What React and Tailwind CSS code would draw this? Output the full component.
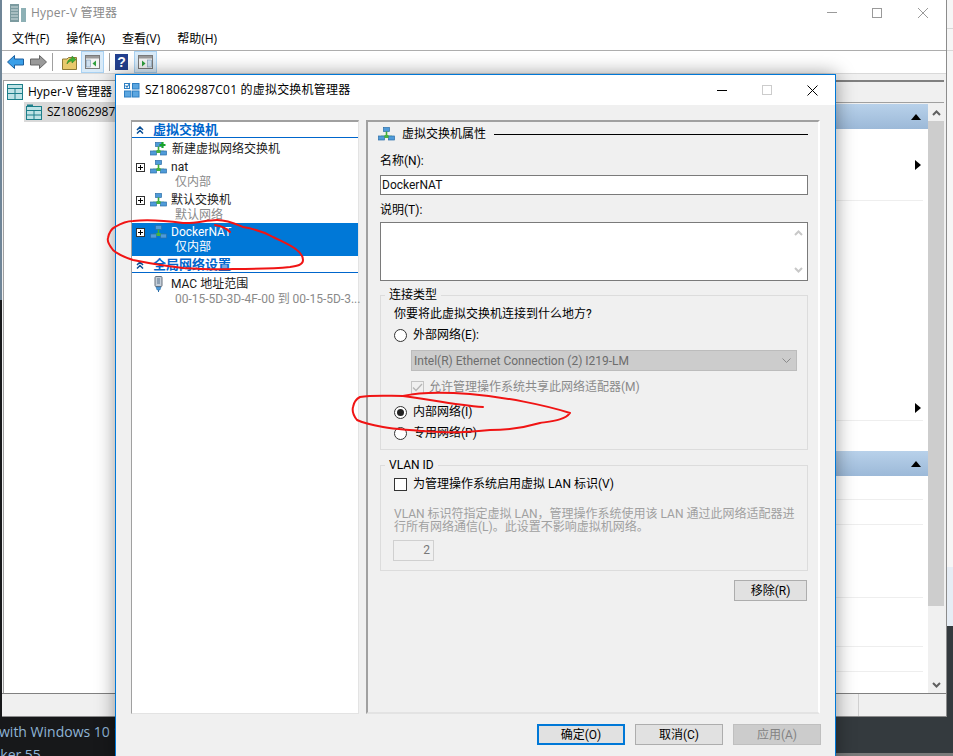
function NetIcon({ plus = false }) {
  return (
    <svg width="17" height="14" viewBox="0 0 17 14" className="shrink-0">
      <rect x="5.5" y="0.5" width="6" height="4" fill="#4f9bd9" stroke="#2c6ea8" strokeWidth="0.7" />
      <path d="M8.5 4.5V9M3 9.5H14" stroke="#3fae35" strokeWidth="1.6" fill="none" />
      <rect x="0.5" y="9" width="6" height="4" fill="#4f9bd9" stroke="#2c6ea8" strokeWidth="0.7" />
      <rect x="10.5" y="9" width="6" height="4" fill="#4f9bd9" stroke="#2c6ea8" strokeWidth="0.7" />
      <rect x="6.5" y="8" width="4" height="3" fill="#49b33f" />
      {plus && <path d="M12.5 0V6M9.5 3H15.5" stroke="#17a32b" strokeWidth="2.2" />}
    </svg>
  )
}

function PlugIcon() {
  return (
    <svg width="11" height="16" viewBox="0 0 11 16" className="shrink-0">
      <rect x="2" y="0.5" width="7" height="10" rx="1" fill="#c5ced8" stroke="#66717d" />
      <rect x="4" y="2" width="3" height="6" fill="#8fa0b2" />
      <path d="M3 11H8L7 14H4Z" fill="#4f9bd9" stroke="#2c6ea8" strokeWidth="0.5" />
      <path d="M5.5 14V16" stroke="#2c6ea8" />
    </svg>
  )
}

function ExpandBox() {
  return (
    <span className="w-[9px] h-[9px] border border-[#333] bg-white flex items-center justify-center shrink-0">
      <svg width="7" height="7" viewBox="0 0 7 7">
        <path d="M1 3.5H6M3.5 1V6" stroke="#000" strokeWidth="1" />
      </svg>
    </span>
  )
}

function ChevronsUp() {
  return (
    <svg width="8" height="8" viewBox="0 0 8 8" className="shrink-0">
      <path d="M1 4L4 1L7 4M1 7.5L4 4.5L7 7.5" fill="none" stroke="#0a4f96" strokeWidth="1.5" />
    </svg>
  )
}

function ScrollArrow({ color, down = false }) {
  return (
    <svg width="9" height="6" viewBox="0 0 9 6" className={down ? 'rotate-180' : ''}>
      <path d="M1 5L4.5 1.5L8 5" fill="none" stroke={color} strokeWidth="2" />
    </svg>
  )
}

function SectionHeader({ children }) {
  return (
    <div className="h-4 border-b border-[#0066cc] flex items-center pl-[4px] gap-[9px] text-[13px] leading-[14px] font-bold text-[#0066cc]">
      <ChevronsUp />
      <span>{children}</span>
    </div>
  )
}

function SwitchRow({ name, sub, selected = false }) {
  return (
    <div className={selected ? 'bg-[#0078d7] h-[33px] pt-px' : ''}>
      <div className="h-4 flex items-center pl-[4px]">
        <ExpandBox />
        <span className="ml-[5px]"><NetIcon /></span>
        <span className={`ml-[4px] text-[12px] leading-4 ${selected ? 'text-white' : 'text-[#1a1a1a]'}`}>{name}</span>
      </div>
      <div className={`-mt-px h-4 pl-[43px] text-[12px] leading-4 ${selected ? 'text-white' : 'text-[#8a8a8a]'}`}>{sub}</div>
    </div>
  )
}

function Radio({ checked = false }) {
  return (
    <span className="w-[13px] h-[13px] rounded-full border border-[#333] bg-white flex items-center justify-center shrink-0">
      {checked && <span className="w-[7px] h-[7px] rounded-full bg-[#222]" />}
    </span>
  )
}

function DialogButton({ children, primary = false, disabled = false }) {
  return (
    <div className={`w-[88px] h-[21px] flex items-center justify-center text-[12px] border ${primary ? 'border-2 border-[#0078d7] bg-[#e1e1e1] text-black' : disabled ? 'border-[#bfbfbf] bg-[#cccccc] text-[#838383]' : 'border-[#adadad] bg-[#e1e1e1] text-black'}`}>
      {children}
    </div>
  )
}

function ToolHighlight({ flip = false }) {
  return (
    <div className="w-[23px] h-[22px] bg-[#d9ebf9] border border-[#a9d2f3] flex items-center justify-center">
      <svg width="15" height="14" viewBox="0 0 15 14">
        <rect x="0.5" y="0.5" width="14" height="13" fill="#f4f4f4" stroke="#7a7a7a" />
        <rect x="1" y="1" width="13" height="2.5" fill="#9a9a9a" />
        {flip ? (
          <>
            <rect x="9.5" y="5" width="4" height="7" fill="#cfe0ef" stroke="#7b98b3" strokeWidth="0.6" />
            <path d="M4 5.5L7.5 8.5L4 11.5Z" fill="#2f9e3c" />
          </>
        ) : (
          <>
            <rect x="1.5" y="5" width="4" height="7" fill="#cfe0ef" stroke="#7b98b3" strokeWidth="0.6" />
            <path d="M11 5.5L7.5 8.5L11 11.5Z" fill="#2f9e3c" />
          </>
        )}
      </svg>
    </div>
  )
}

function Toolbar() {
  return (
    <div className="h-[23px] shrink-0 border-b border-[#d9d9d9] bg-white flex items-center pl-[5px]">
      <svg width="17" height="14" viewBox="0 0 17 14">
        <path d="M0.5 7L7.5 0.5V4H16.5V10H7.5V13.5Z" fill="#3a9fe8" stroke="#1c5f9e" />
      </svg>
      <svg width="17" height="14" viewBox="0 0 17 14" className="ml-[6px]">
        <path d="M16.5 7L9.5 0.5V4H0.5V10H9.5V13.5Z" fill="#9a9a9a" stroke="#666" />
      </svg>
      <div className="ml-[5px] w-px h-[18px] bg-[#a0a0a0]" />
      <svg width="15" height="15" viewBox="0 0 15 15" className="ml-[9px]">
        <path d="M0.5 4H5L6.5 2.5H14.5V14.5H0.5Z" fill="#e8c96c" stroke="#8f7a36" />
        <path d="M5 9C5.5 5 8 3.5 10 3.5V1L14 4.5L10 8V6C8 6 6 7 5 9Z" fill="#3fae35" stroke="#227a1c" strokeWidth="0.5" />
      </svg>
      <div className="ml-[4px]"><ToolHighlight /></div>
      <div className="ml-[5px] w-px h-[18px] bg-[#a0a0a0]" />
      <svg width="13" height="16" viewBox="0 0 13 16" className="ml-[5px]">
        <rect width="13" height="16" fill="#23408f" />
        <text x="6.5" y="13" textAnchor="middle" fontSize="14" fontWeight="700" fill="#fff" fontFamily="Liberation Sans, sans-serif">?</text>
      </svg>
      <div className="ml-[6px]"><ToolHighlight flip /></div>
    </div>
  )
}

function ActionHeader() {
  return (
    <div className="h-[25px] shrink-0 bg-gradient-to-b from-[#b8d1ea] to-[#9cb9d8] flex items-center justify-end pr-[7px]">
      <svg width="10" height="6" viewBox="0 0 10 6"><path d="M5 0L10 6H0Z" fill="#000" /></svg>
    </div>
  )
}

function ActionRow({ height, arrow = false, low = false }) {
  return (
    <div className={`${height} shrink-0 mr-[5px] border-b border-[#eeeeee] flex justify-end ${low ? 'items-end pb-[7px]' : 'items-center'}`}>
      {arrow && <svg width="6" height="10" viewBox="0 0 6 10" className="mr-[2px]"><path d="M0 0L6 5L0 10Z" fill="#000" /></svg>}
    </div>
  )
}

function MainWindow() {
  return (
    <div className="absolute left-[2px] top-0 w-[945px] h-[717px] flex flex-col bg-white border-r border-b border-[#8c8c8c]">
      {/* Title bar */}
      <div className="h-[25px] shrink-0 flex items-center pl-[8px] text-[12px] text-[#8a8a8a]">
        <svg width="16" height="18" viewBox="0 0 16 18">
          <rect x="0" y="0" width="9" height="18" fill="#7c9ba0" />
          <path d="M1 3H8M1 6H8M1 9H8M1 12H8M1 15H8" stroke="#d3e0e2" />
          <rect x="11" y="4" width="5" height="14" fill="#8db0b5" />
        </svg>
        <span className="ml-[5px] tracking-[0.2px]">Hyper-V 管理器</span>
        <div className="ml-auto flex items-center">
          <div className="w-[10px] h-px bg-[#9a9a9a] mr-[35px]" />
          <div className="w-[10px] h-[10px] border border-[#9a9a9a] mr-[36px]" />
          <svg width="10" height="10" viewBox="0 0 10 10" className="mr-[18px]"><path d="M0 0L10 10M10 0L0 10" stroke="#9a9a9a" /></svg>
        </div>
      </div>
      {/* Menu */}
      <div className="h-[26px] shrink-0 flex items-center pl-[10px] pt-[2px] gap-[17px] text-[12px] text-black border-b border-[#adadad]">
        <span>文件(F)</span>
        <span>操作(A)</span>
        <span>查看(V)</span>
        <span>帮助(H)</span>
      </div>
      <Toolbar />
      {/* Panes */}
      <div className="flex-1 min-h-0 bg-[#f0f0f0] flex flex-col">
        <div className="flex-1 min-h-0 flex pt-[6px] pl-px pr-[2px]">
          <div className="w-[300px] shrink-0 bg-white border-l border-t border-[#a0a0a0] pt-[1px]">
            <div className="h-[20px] flex items-center pl-[3px] text-[12px] text-black">
              <svg width="16" height="16" viewBox="0 0 16 16">
                <rect x="0.5" y="0.5" width="15" height="15" fill="#bfe3e6" stroke="#1d7f8a" />
                <path d="M1 4.5H15M1 9.5H15M8 4.5V15" stroke="#1d7f8a" />
              </svg>
              <span className="ml-[5px]">Hyper-V 管理器</span>
            </div>
            <div className="ml-[20px] h-[20px] bg-[#d9d9d9] flex items-center pl-[2px] text-[12px] text-black">
              <svg width="16" height="16" viewBox="0 0 16 16">
                <rect x="0.5" y="2.5" width="15" height="13" fill="#bfe3e6" stroke="#1d7f8a" />
                <path d="M1 6.5H15M1 11H15M8 6.5V15" stroke="#1d7f8a" />
                <rect x="1" y="0.5" width="6" height="2" fill="#1d7f8a" />
              </svg>
              <span className="ml-[5px]">SZ18062987C01</span>
            </div>
          </div>
          <div className="flex-1 flex flex-col">
            <div className="h-[2px] bg-[#808080] shrink-0" />
            <div className="h-[21px] border-b border-[#a0a0a0] shrink-0" />
            <div className="flex-1 min-h-0 flex mt-px">
              <div className="flex-1 bg-white flex flex-col">
                <ActionHeader />
                <ActionRow height="h-[72px]" arrow />
                <ActionRow height="h-[220px]" arrow low />
                <div className="h-[30px] shrink-0" />
                <ActionHeader />
                <ActionRow height="h-[24px]" />
                <ActionRow height="h-[25px]" />
                <ActionRow height="h-[73px]" />
                <ActionRow height="h-[49px]" />
                <ActionRow height="h-[25px]" />
              </div>
              <div className="w-[16px] shrink-0 bg-[#f0f0f0] flex flex-col items-center">
                <div className="h-[17px] shrink-0 flex items-center justify-center">
                  <ScrollArrow color="#606060" />
                </div>
                <div className="w-full h-[485px] shrink-0 bg-[#cdcdcd]" />
                <div className="mt-auto h-[17px] flex items-center justify-center">
                  <ScrollArrow color="#606060" down />
                </div>
              </div>
            </div>
          </div>
        </div>
        {/* Status bar */}
        <div className="h-[23px] shrink-0 border-t border-[#808080] flex justify-end">
          <div className="w-[88px] border-l border-[#d0d0d0]" />
        </div>
      </div>
    </div>
  )
}

function LeftPanel() {
  return (
    <div className="w-[228px] shrink-0 bg-white border-t-2 border-l border-t-[#a0a0a0] border-l-[#a0a0a0] border-r border-b border-r-[#e3e3e3] border-b-[#e3e3e3]">
      <SectionHeader>虚拟交换机</SectionHeader>
      <div className="h-4 mt-[3px] flex items-center pl-[18px]">
        <NetIcon plus />
        <span className="ml-[5px] text-[12px] leading-4 text-[#1a1a1a]">新建虚拟网络交换机</span>
      </div>
      <div className="mt-[2px]"><SwitchRow name="nat" sub="仅内部" /></div>
      <div className="mt-[2px]"><SwitchRow name="默认交换机" sub="默认网络" /></div>
      <SwitchRow name="DockerNAT" sub="仅内部" selected />
      <div className="mt-px"><SectionHeader>全局网络设置</SectionHeader></div>
      <div className="h-4 mt-[3px] flex items-center pl-[21px]">
        <PlugIcon />
        <span className="ml-[7px] text-[12px] leading-4 text-[#1a1a1a]">MAC 地址范围</span>
      </div>
      <div className="-mt-px h-4 pl-[43px] text-[12px] leading-4 text-[#8a8a8a] whitespace-nowrap">00-15-5D-3D-4F-00 到 00-15-5D-3...</div>
    </div>
  )
}

function RightPanel() {
  return (
    <div className="flex-1 bg-[#f0f0f0] border-t-2 border-l-2 border-t-[#a0a0a0] border-l-[#a0a0a0] border-r-2 border-b-2 border-r-white border-b-[#e3e3e3] pl-[12px] pr-[10px] flex flex-col text-[12px] leading-4 text-black">
      <div className="mt-[4px] h-4 flex items-center -ml-[2px]">
        <NetIcon />
        <span className="ml-[7px]">虚拟交换机属性</span>
        <div className="ml-[8px] flex-1 h-px bg-black" />
      </div>
      <div className="mt-[11px] h-4">名称(N):</div>
      <div className="mt-[6px] h-5 border border-[#7a7a7a] bg-white pl-[1px] leading-[18px] text-[#111]">DockerNAT</div>
      <div className="mt-[7px] h-4">说明(T):</div>
      <div className="mt-[4px] h-[59px] border border-[#7a7a7a] bg-white flex justify-end">
        <div className="w-[17px] flex flex-col items-center justify-between py-[7px]">
          <ScrollArrow color="#c8c8c8" />
          <ScrollArrow color="#c8c8c8" down />
        </div>
      </div>

      <fieldset className="mt-[6px] h-[163px] border border-[#dcdcdc] pl-[13px]">
        <legend className="-ml-[9px] px-[4px] h-4 leading-4">连接类型</legend>
        <div className="mt-[3px] h-4">你要将此虚拟交换机连接到什么地方?</div>
        <div className="mt-[5px] h-4 flex items-center">
          <Radio />
          <span className="ml-[6px]">外部网络(E):</span>
        </div>
        <div className="mt-[7px] ml-[17px] mr-[10px] h-[21px] border border-[#bcbcbc] bg-[#cccccc] text-[#6d6d6d] flex items-center justify-between pl-[2px] pr-[5px]">
          <span>Intel(R) Ethernet Connection (2) I219-LM</span>
          <svg width="9" height="5" viewBox="0 0 9 5"><path d="M0.5 0.5L4.5 4.5L8.5 0.5" fill="none" stroke="#8a8a8a" /></svg>
        </div>
        <div className="mt-[8px] ml-[17px] h-4 flex items-center text-[#8a8a8a]">
          <span className="w-[13px] h-[13px] border border-[#c4c4c4] flex items-center justify-center">
            <svg width="11" height="9" viewBox="0 0 11 9"><path d="M1 4.5L4 7.5L10 1" fill="none" stroke="#b5b5b5" strokeWidth="1.3" /></svg>
          </span>
          <span className="ml-[5px]">允许管理操作系统共享此网络适配器(M)</span>
        </div>
        <div className="mt-[9px] h-4 flex items-center">
          <Radio checked />
          <span className="ml-[6px]">内部网络(I)</span>
        </div>
        <div className="mt-[5px] h-4 flex items-center">
          <Radio />
          <span className="ml-[6px]">专用网络(P)</span>
        </div>
      </fieldset>

      <fieldset className="mt-[7px] h-[114px] border border-[#dcdcdc] pl-[13px]">
        <legend className="-ml-[9px] px-[4px] h-4 leading-4">VLAN ID</legend>
        <div className="mt-[3px] h-4 flex items-center">
          <span className="w-[13px] h-[13px] border border-[#333] bg-white shrink-0" />
          <span className="ml-[6px]">为管理操作系统启用虚拟 LAN 标识(V)</span>
        </div>
        <div className="mt-[16px] mr-[10px] text-[#a0a0a0] leading-[13px]">
          VLAN 标识符指定虚拟 LAN，管理操作系统使用该 LAN 通过此网络适配器进行所有网络通信(L)。此设置不影响虚拟机网络。
        </div>
        <div className="mt-[6px] w-[41px] h-[21px] -ml-px border border-[#d0d0d0] text-right pr-[3px] leading-[19px] text-[#777]">2</div>
      </fieldset>

      <div className="mt-[9px] self-end mr-px w-[73px] h-[21px] border border-[#adadad] bg-[#e1e1e1] flex items-center justify-center">移除(R)</div>
    </div>
  )
}

function SwitchManager() {
  return (
    <div className="absolute left-[115px] top-[74px] w-[721px] h-[690px] border border-[#0078d7] bg-[#f0f0f0] flex flex-col shadow-[0_0_18px_rgba(0,0,0,0.4)]">
      <div className="h-[30px] shrink-0 bg-white flex items-center pl-[8px] text-[12px] text-black">
        <svg width="16" height="16" viewBox="0 0 16 16">
          <rect x="0.5" y="1.5" width="5" height="5" fill="#fff" stroke="#2e7fc2" />
          <path d="M1.5 3.5L3 5L6 1" fill="none" stroke="#2e7fc2" strokeWidth="1.2" />
          <rect x="8.5" y="1.5" width="6.5" height="5.5" fill="#5ba6e0" stroke="#2e7fc2" />
          <rect x="0.5" y="9" width="6.5" height="6" fill="#5ba6e0" stroke="#2e7fc2" />
          <rect x="8.5" y="9" width="6.5" height="6" fill="#5ba6e0" stroke="#2e7fc2" />
        </svg>
        <span className="ml-[5px] tracking-[0.2px]">SZ18062987C01 的虚拟交换机管理器</span>
        <div className="ml-auto flex items-center">
          <div className="w-[10px] h-px bg-black mr-[35px]" />
          <div className="w-[10px] h-[10px] border border-[#cccccc] mr-[35px]" />
          <svg width="11" height="11" viewBox="0 0 11 11" className="mr-[17px]"><path d="M0.5 0.5L10.5 10.5M10.5 0.5L0.5 10.5" stroke="#000" /></svg>
        </div>
      </div>
      <div className="flex-1 min-h-0 pt-[15px] px-[15px] flex flex-col">
        <div className="h-[594px] shrink-0 flex gap-[7px] font-[family-name:Roboto,'Noto_Sans_CJK_SC',sans-serif]">
          <LeftPanel />
          <RightPanel />
        </div>
        <div className="mt-[10px] -mr-px flex justify-end gap-[10px] font-[family-name:Roboto,'Noto_Sans_CJK_SC',sans-serif]">
          <DialogButton primary>确定(O)</DialogButton>
          <DialogButton>取消(C)</DialogButton>
          <DialogButton disabled>应用(A)</DialogButton>
        </div>
      </div>
    </div>
  )
}

// red marker scribbles drawn on top of the screenshot
function Annotations() {
  return (
    <svg className="absolute inset-0 pointer-events-none" width="953" height="756" viewBox="0 0 953 756" fill="none" stroke="#f01414" strokeWidth="2" strokeLinecap="round" strokeLinejoin="round">
      <path d="M133 221C150 219 168 221 183 223C195 224 206 220 217 220C228 220 236 224 243 227C255 229 264 232 273 237C287 244 303 250 303 260C303 265 297 266 290 267C270 269 250 269 233 269C215 270 198 269 183 268C165 266 148 263 133 260C124 257 117 254 113 250C109 245 107 241 108 238C109 233 111 229 115 227C120 224 127 221 133 221Z" />
      <path d="M215 225C222 226 226 228 230 232" />
      <path d="M483 407C455 405 428 399 403 396C420 392 445 392 470 394C505 397 545 405 570 413C565 420 553 421 540 423C523 428 505 430 490 430C470 432 455 433 440 432C420 431 400 430 383 427C372 425 363 423 357 420C353 415 352 411 353 407C354 402 356 399 360 397C372 395 388 396 403 396" />
    </svg>
  )
}

export default function App() {
  return (
    <div className="relative w-[953px] h-[756px] overflow-hidden bg-[#17181a] font-[family-name:'Open_Sans','Noto_Sans_CJK_SC',sans-serif]">
      {/* desktop behind the windows */}
      <div className="absolute right-0 top-0 w-[120px] h-full flex flex-col bg-[#343a3e]">
        <div className="h-[29px] shrink-0 bg-[#f6f6f6] border-b border-[#d8d8d8]" />
        <div className="h-[22px] shrink-0 bg-[#f6f6f6] border-b border-[#d8d8d8]" />
        <div className="h-[516px] shrink-0 bg-[#f6f6f6]" />
        <div className="h-[59px] shrink-0 bg-[#e6edf5]" />
        <div className="flex-1" />
        <div className="h-[3px] shrink-0 bg-[#7a7a7a]" />
      </div>
      <div className="absolute left-0 top-0 w-[2px] h-[300px] bg-[#6f8597]" />
      <div className="absolute -left-[1px] top-[720px] text-[14px] leading-6 text-[#8fb4d6] whitespace-nowrap">with Windows 10 1</div>
      <div className="absolute -left-[25px] top-[743px] text-[14px] leading-6 text-[#8fb4d6] whitespace-nowrap">Docker 55</div>
      <MainWindow />
      <SwitchManager />
      <Annotations />
    </div>
  )
}
